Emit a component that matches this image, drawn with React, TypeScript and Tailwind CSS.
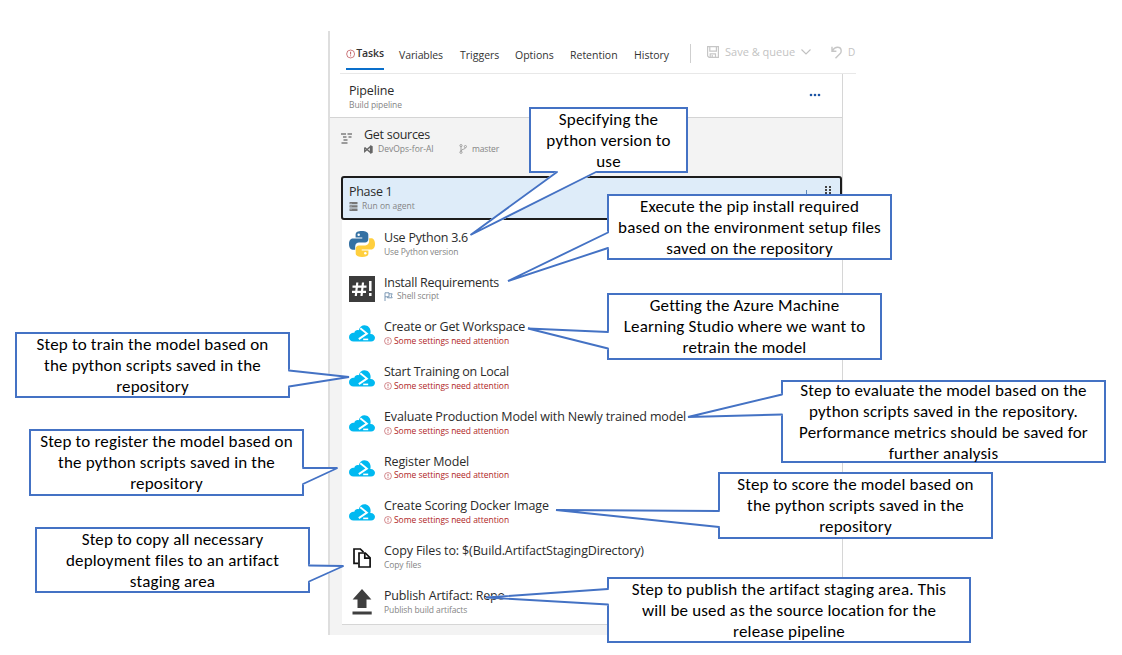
import type { ReactNode } from "react";

const ALERT = "#b3343a";

function AlertIcon({ className }: { className: string }) {
  return (
    <svg viewBox="0 0 10 10" className={className} fill="none" stroke={ALERT}>
      <circle cx="5" cy="5" r="4.3" strokeWidth="0.7" />
      <path d="M5 2.5v3M5 6.5v1" strokeWidth="0.9" />
    </svg>
  );
}

function PythonIcon() {
  return (
    <svg viewBox="0 0 26 26" className="h-[26px] w-[26px]">
      <path
        fill="#3571a3"
        d="M12.9 0C9 0 6.6 .9 6.6 3.6v2.9h6.7v1H3.9C1.3 7.500 0 9.900 0 13s1.300 5.700 3.700 5.700h2.500v-3.300c0-2.300 1.800-3.800 3.800-3.800h6.100c1.900 0 3.200-1.500 3.200-3.300V3.600C19.300 1.200 16.600 0 12.900 0z"
      />
      <path
        fill="#ffcf3e"
        d="M13.100 26c3.900 0 6.300-.9 6.300-3.600v-2.900h-6.700v-1h9.400c2.600 0 3.900-2.400 3.900-5.500s-1.300-5.700-3.700-5.700h-2.200v3.300c0 2.300-1.800 3.800-3.800 3.800H9.900c-1.900 0-3.200 1.500-3.200 3.300v4.700c0 2.400 2.700 3.600 6.400 3.600z"
      />
      <circle cx="9.700" cy="3.700" r="1.250" fill="#fff" />
      <circle cx="16.300" cy="22.300" r="1.250" fill="#fff" />
    </svg>
  );
}

function ShellIcon() {
  return (
    <svg viewBox="0 0 26 26" className="h-[26px] w-[26px]">
      <path fill="#3c3c3c" d="M0 0h26v26H0z" />
      <path
        d="M8.300 6.500L6.800 20M14 6.500L12.500 20M3.500 10.700h14M3 15.800h14"
        stroke="#fff"
        strokeWidth="2.200"
      />
      <path d="M21.300 5v10M21.300 17v3" stroke="#fff" strokeWidth="2.500" />
    </svg>
  );
}

function PowerShellCloud() {
  return (
    <svg viewBox="0 0 26 17" className="h-[17px] w-[26px]">
      <path
        fill="#00b9f1"
        d="M4.600 16.500C1.900 16.500 0 14.600 0 12.200c0-2.300 1.800-4.200 4-4.500.5-.1.900 0 1.300.1C5.800 6.200 7 5.200 8.700 5.100c.4 0 .8 0 1.100.1C10.600 2.100 12.900.3 15.500.3c3.500 0 6.100 2.900 6.100 6.400 0 .9-.1 1.500-.3 2.200 2.700-.2 4.700 1.600 4.700 3.900 0 2.200-1.700 3.700-3.900 3.700z"
      />
      <path d="M11.300 3.300l6.600 5.300-8.100 5.500" fill="none" stroke="#fff" strokeWidth="1.900" />
      <path d="M14.200 14.400h5" stroke="#fff" strokeWidth="1.600" />
    </svg>
  );
}

function CopyIcon() {
  return (
    <svg viewBox="0 0 18 20" className="h-[20px] w-[18px]" fill="none" stroke="#111" strokeWidth="1.700">
      <path d="M5.300 15.300H1V1h6.300l3.200 3.200" />
      <path d="M6 5h6.300l4.800 4.800V19H6z" fill="#fff" />
      <path d="M11.800 5v5.200h5.300" />
    </svg>
  );
}

function PublishIcon() {
  return (
    <svg viewBox="0 0 20 26" className="h-[26px] w-[20px]" fill="#3f3f3f">
      <path d="M10 0l9.400 10.600h-4.900V19h-9v-8.400H.6z" />
      <path d="M.5 22.500h19.200v3H.5z" />
    </svg>
  );
}

function FlagIcon() {
  return (
    <svg viewBox="0 0 9 9" className="h-[9px] w-[9px]" fill="none" stroke="#6f8fae" strokeWidth="0.900">
      <path d="M1 9V.8h4v4H1M5 1.800h3.200L7.200 3.800l1 2H3.500V4.800" />
    </svg>
  );
}

type Step = { title: string; fit: string; icon: ReactNode; note?: string; noteFit?: string; flag?: boolean };

const steps: Step[] = [
  { title: "Use Python 3.6", fit: "tracking-[-0.23px]", icon: <PythonIcon />, note: "Use Python version", noteFit: "tracking-[-0.12px]" },
  { title: "Install Requirements", fit: "tracking-[-0.25px]", icon: <ShellIcon />, note: "Shell script", noteFit: "tracking-[-0.1px]", flag: true },
  { title: "Create or Get Workspace", fit: "tracking-[-0.2px]", icon: <PowerShellCloud /> },
  { title: "Start Training on Local", fit: "tracking-[-0.23px]", icon: <PowerShellCloud /> },
  { title: "Evaluate Production Model with Newly trained model", fit: "tracking-[-0.14px]", icon: <PowerShellCloud /> },
  { title: "Register Model", fit: "tracking-[-0.14px]", icon: <PowerShellCloud /> },
  { title: "Create Scoring Docker Image", fit: "tracking-[-0.13px]", icon: <PowerShellCloud /> },
  { title: "Copy Files to: $(Build.ArtifactStagingDirectory)", fit: "tracking-[-0.13px]", icon: <CopyIcon />, note: "Copy files", noteFit: "tracking-[-0.1px]" },
  { title: "Publish Artifact: Repo", fit: "tracking-[-0.17px]", icon: <PublishIcon />, note: "Publish build artifacts", noteFit: "tracking-[-0.1px]" },
];

function StepRow({ step }: { step: Step }) {
  return (
    <li className="flex h-[44.750px] items-center">
      <span className="ml-[7px] flex w-[26px] justify-center pt-[2px]">{step.icon}</span>
      <div className="ml-[9px] pt-px">
        <div className={`text-[12.5px] leading-[16px] text-[#2b2b2b] ${step.fit}`}>{step.title}</div>
        {step.note ? (
          <div className={`flex h-[12px] items-center gap-1 text-[8.5px] text-[#858585] ${step.noteFit}`}>
            {step.flag && <FlagIcon />}
            {step.note}
          </div>
        ) : (
          <div className="flex h-[12px] items-center gap-[2px] text-[8.5px] tracking-[-0.04px] text-[#b01e25]">
            <AlertIcon className="h-[8px] w-[8px]" />
            Some settings need attention
          </div>
        )}
      </div>
    </li>
  );
}

function Toolbar() {
  return (
    <div className="ml-[10px] flex h-[43px] border-b border-[#e8e8e8] text-[10.5px] leading-[16px] text-[#333]">
      <div className="ml-[6px] mt-[14px] flex h-[25px] w-[38px] items-start border-b-2 border-[#0a6fcb]">
        <AlertIcon className="mt-[4px] h-[10px] w-[10px]" />
        <span className="ml-px font-semibold tracking-[-0.1px]">Tasks</span>
      </div>
      <nav className="mt-[16px] flex">
        <span className="ml-[15px] w-[61px] tracking-[-0.1px]">Variables</span>
        <span className="w-[55px]">Triggers</span>
        <span className="w-[55px]">Options</span>
        <span className="w-[64px]">Retention</span>
        <span className="w-[56px]">History</span>
      </nav>
      <span className="mt-[13px] h-[19px] w-px bg-[#cfcfcf]" />
      <div className="mt-[13px] flex h-[16px] items-center text-[11px] text-[#c3c3c3]">
        <svg viewBox="0 0 12 12" className="ml-[16px] h-[12px] w-[12px] shrink-0" fill="none" stroke="#c6c6c6" strokeWidth="1.200">
          <path d="M.6.6h10.800v10.800H2.100L.6 9.900zM2.800.6v4.600h6.600V.6M3.200 11.400V7.900h5.300v3.500M5.200 9v2.400" />
        </svg>
        <span className="ml-[6px] w-[75px] shrink-0 whitespace-nowrap font-medium">Save &amp; queue</span>
        <svg viewBox="0 0 10 6" className="ml-px h-[6px] w-[10px] shrink-0" fill="none" stroke="#c0c0c0" strokeWidth="1.100">
          <path d="M.5.5L5 5 9.500.5" />
        </svg>
        <svg viewBox="0 0 11 13" className="ml-[20px] h-[13px] w-[11px] shrink-0" fill="none" stroke="#c6c6c6" strokeWidth="1.400">
          <path d="M1 .8v4.400h4.400M1.200 5C2.800 2.300 4.500 1.300 6.500 1.300c2.200 0 3.700 1.600 3.700 3.600 0 1.400-.6 2.300-1.500 3.200L4.500 12.300" />
        </svg>
        <span className="ml-[6px] text-[10px] font-medium">D</span>
      </div>
    </div>
  );
}

function PipelinePanel() {
  return (
    <section className="ml-[328px] mt-[31px] flex h-[604px] w-[528px] flex-col overflow-hidden border-l-2 border-[#dedede]">
      <Toolbar />
      <div className="flex min-h-0 flex-1 flex-col">
        <div className="flex min-h-0 w-[513px] flex-1 flex-col border-r border-[#d6d6d6] bg-[#f3f3f3]">
          <header className="flex h-[44px] shrink-0 justify-between border-b border-[#d4d4d4] bg-white pl-[19px]">
            <div className="pt-[9px]">
              <div className="text-[12.5px] leading-[16px] tracking-[-0.17px] text-[#2b2b2b]">Pipeline</div>
              <div className="text-[8.5px] leading-[12px] tracking-[-0.08px] text-[#858585]">Build pipeline</div>
            </div>
            <svg viewBox="0 0 12 4" className="mr-[21px] mt-[19px] h-[4px] w-[12px]" fill="#1c55a5">
              <circle cx="2" cy="2" r="1.300" />
              <circle cx="6" cy="2" r="1.300" />
              <circle cx="10" cy="2" r="1.300" />
            </svg>
          </header>
          <div className="flex h-[58px] shrink-0 pt-[9px]">
            <svg viewBox="0 0 12 11" className="ml-[11px] mt-[6px] h-[11px] w-[12px]" fill="none" stroke="#444" strokeWidth="1.200">
              <path d="M0 1h5M6.500 1h4.500M2 4h3.500M7.500 4h3M2.500 7h4M.5 10h6" />
            </svg>
            <div className="ml-[11px]">
              <div className="text-[12.5px] leading-[16px] tracking-[-0.27px] text-[#2b2b2b]">Get sources</div>
              <div className="flex h-[12px] items-center text-[8.5px] text-[#858585]">
                <svg viewBox="0 0 9 9" className="h-[9px] w-[9px]" fill="none" stroke="#666" strokeWidth="1.300">
                  <path d="M.7 2.500v4L6.500 1.500v6L.7 2.500" />
                  <path d="M6.300 .3L8.700 1.200v6.600l-2.400 .9z" fill="#666" stroke="none" />
                </svg>
                <span className="ml-[5px] w-[81px]">DevOps-for-AI</span>
                <svg viewBox="0 0 8 10" className="h-[10px] w-[8px]" fill="none" stroke="#999" strokeWidth="0.900">
                  <circle cx="2" cy="1.600" r="1.100" />
                  <circle cx="6.400" cy="2.600" r="1.100" />
                  <circle cx="2" cy="8.300" r="1.100" />
                  <path d="M2 2.700v4.500M6.400 3.700C6.400 5.700 2 4.900 2 7" />
                </svg>
                <span className="ml-[5px] tracking-[-0.15px]">master</span>
              </div>
            </div>
          </div>
          <div className="ml-[11px] flex h-[44px] shrink-0 justify-between rounded-[3px] border-2 border-[#1c1c1c] bg-[#deecf9] pl-[6px]">
            <div className="pt-[6px]">
              <div className="text-[12.5px] leading-[16px] tracking-[-0.3px] text-[#2b2b2b]">Phase 1</div>
              <div className="flex h-[12px] items-center gap-[4px] text-[8.5px] text-[#858585]">
                <svg viewBox="0 0 9 9" className="h-[9px] w-[9px]" fill="#777">
                  <path d="M.5 0h8v2.300h-8zM.5 3.300h8v2.300h-8zM.5 6.600h8v2.300h-8z" />
                  <path d="M1.500 .9h1v.6h-1zM1.500 4.200h1v.6h-1zM1.500 7.500h1v.6h-1z" fill="#deecf9" />
                </svg>
                Run on agent
              </div>
            </div>
            <svg viewBox="0 0 30 14" className="mr-[7px] mt-[8px] h-[14px] w-[30px]" fill="#444">
              <path d="M3 4h1v10H3z" fill="#5c86b8" />
              <path d="M22 0h2v2h-2zM26 0h2v2h-2zM22 3h2v2h-2zM26 3h2v2h-2zM22 6h2v2h-2zM26 6h2v2h-2z" />
            </svg>
          </div>
          <ul className="ml-[12px] shrink-0 border-b border-[#d6d6d6] bg-white pt-px">
            {steps.map((s) => (
              <StepRow key={s.title} step={s} />
            ))}
          </ul>
        </div>
      </div>
    </section>
  );
}

type Note = { box: string; lines: string[]; tail: string };

const notes: Note[] = [
  { box: "left-[529px] top-[107px] h-[66px] w-[159px]", lines: ["Specifying the", "python version to", "use"], tail: "557,172 470.5,235 596,172" },
  { box: "left-[607px] top-[194px] h-[66px] w-[285px]", lines: ["Execute the pip install required", "based on the environment setup files", "saved on the repository"], tail: "608,232.500 508,281 608,248" },
  { box: "left-[607px] top-[293px] h-[67px] w-[275px]", lines: ["Getting the Azure Machine", "Learning Studio where we want to", "retrain the model"], tail: "608,332 528,328.500 608,348.500" },
  { box: "left-[15px] top-[332px] h-[66px] w-[275px]", lines: ["Step to train the model based on", "the python scripts saved in the", "repository"], tail: "289,370.500 349,377 289,386.500" },
  { box: "left-[29px] top-[429px] h-[67px] w-[275px]", lines: ["Step to register the model based on", "the python scripts saved in the", "repository"], tail: "303,468 337.500,468 303,484" },
  { box: "left-[35px] top-[527px] h-[66px] w-[275px]", lines: ["Step to copy all necessary", "deployment files to an artifact", "staging area"], tail: "309,565.500 343.500,566 309,581.500" },
  { box: "left-[781px] top-[380px] h-[83px] w-[325px]", lines: ["Step to evaluate the model based on the", "python scripts saved in the repository.", "Performance metrics should be saved for", "further analysis"], tail: "782,394.500 688,417 782,414.500" },
  { box: "left-[718px] top-[472px] h-[67px] w-[275px]", lines: ["Step to score the model based on", "the python scripts saved in the", "repository"], tail: "719,511 556,510 719,527" },
  { box: "left-[607px] top-[577px] h-[66px] w-[364px]", lines: ["Step to publish the artifact staging area. This", "will be used as the source location for the", "release pipeline"], tail: "608,589 486,597.500 608,604.500" },
];

function Callouts() {
  return (
    <div className="absolute inset-0 font-[Carlito,Lato,sans-serif] text-[17px] leading-[21px] tracking-[0.17px] text-black">
      {notes.map((n) => (
        <div key={n.lines[0]} className={`absolute flex flex-col items-center justify-center whitespace-nowrap border-2 border-[#4472c4] bg-white ${n.box}`}>
          {n.lines.map((l) => (
            <span key={l}>{l}</span>
          ))}
        </div>
      ))}
      <svg viewBox="0 0 1122 655" className="absolute inset-0 h-[655px] w-[1122px]">
        {notes.map((n) => (
          <g key={n.tail}>
            <polygon points={n.tail} fill="#fff" stroke="#fff" strokeWidth="2" strokeLinejoin="bevel" />
            <polyline points={n.tail} fill="none" stroke="#4472c4" strokeWidth="1.900" strokeLinejoin="bevel" strokeLinecap="round" />
          </g>
        ))}
      </svg>
    </div>
  );
}

export default function App() {
  return (
    <main className="relative flex h-[655px] w-[1122px] items-start overflow-hidden bg-white font-['Open_Sans','Noto_Sans',sans-serif]">
      <PipelinePanel />
      <Callouts />
    </main>
  );
}
